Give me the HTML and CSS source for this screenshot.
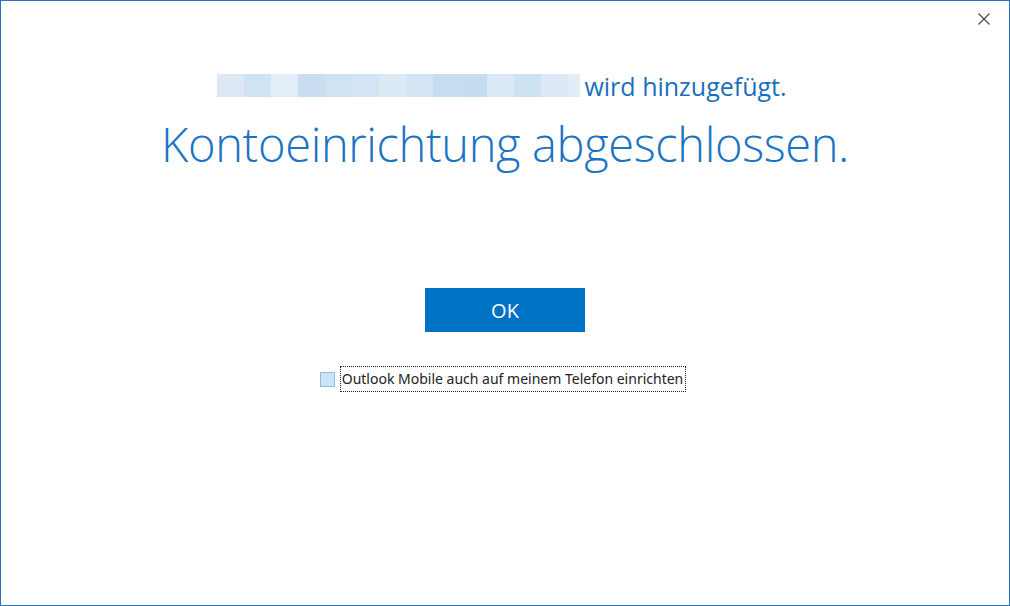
FILE: index.html
```html
<!DOCTYPE html>
<html lang="de">
<head>
  <meta charset="UTF-8">
  <title>Konto hinzufügen</title>
  <link rel="stylesheet" href="styles.css">
</head>
<body>
  <div class="window">
    <button class="close" aria-label="Schließen">
      <svg width="12" height="12" viewBox="0 0 12 12"><path d="M0.5 0.5 L11.5 11.5 M11.5 0.5 L0.5 11.5" stroke="#444" stroke-width="1.1" fill="none"/></svg>
    </button>
    <div class="adding">
      <span class="blurred">
        <i style="background:#dce9f5"></i><i style="background:#d0e3f3"></i><i style="background:#e3eef8"></i><i style="background:#c9def1"></i><i style="background:#d0e3f3"></i><i style="background:#d3e5f4"></i><i style="background:#dceaf6"></i><i style="background:#d3e5f4"></i><i style="background:#c7ddf1"></i><i style="background:#c5dcf1"></i><i style="background:#dbe9f6"></i><i style="background:#cce1f2"></i><i style="background:#dde9f6"></i><i class="last" style="background:#e2edf8"></i>
      </span>
      <span class="adding-text">wird hinzugefügt.</span>
    </div>
    <h1 class="title">Kontoeinrichtung abgeschlossen.</h1>
    <button class="ok">OK</button>
    <label class="mobile">
      <span class="box"></span>
      <span class="focus">Outlook Mobile auch auf meinem Telefon einrichten</span>
    </label>
  </div>
</body>
</html>
```

FILE: styles.css
```css
body {
  margin: 0;
  font-family: "Open Sans", "Noto Sans", sans-serif;
  background: #ffffff;
}
.window {
  box-sizing: border-box;
  width: 1010px;
  height: 606px;
  border: 1px solid #2a72bb;
  display: flex;
  flex-direction: column;
  align-items: center;
  position: relative;
}
.close {
  position: absolute;
  top: 12px;
  right: 19px;
  width: 12px;
  height: 12px;
  padding: 0;
  border: none;
  background: none;
  line-height: 0;
}
.adding {
  display: flex;
  align-items: flex-end;
  margin-top: 70px;
  margin-left: -6px;
  height: 30px;
}
.blurred {
  display: flex;
  height: 23px;
  margin-bottom: 4px;
}
.blurred i {
  display: block;
  width: 27px;
  height: 23px;
}
.blurred i.last {
  width: 12px;
}
.adding-text {
  margin-left: 4px;
  font-size: 25px;
  color: #1a6fbd;
  line-height: 30px;
}
.title {
  margin: 13px 0 0 0;
  font-size: 47px;
  font-weight: 300;
  color: #1a73c3;
  line-height: 60px;
  letter-spacing: -0.35px;
}
.ok {
  margin-top: 114px;
  width: 160px;
  height: 44px;
  border: none;
  background: #0072c6;
  color: #ffffff;
  font-family: inherit;
  font-size: 20px;
  padding: 0;
}
.mobile {
  display: flex;
  align-items: center;
  gap: 5px;
  margin-top: 34px;
  margin-left: -4px;
  font-family: "Noto Sans", sans-serif;
  font-size: 14px;
  color: #222222;
}
.box {
  box-sizing: border-box;
  width: 15px;
  height: 15px;
  background: #cce4f7;
  border: 1px solid #90bde4;
}
.focus {
  border: 1px dotted #222;
  padding: 2px 2px 3px 1px;
  line-height: 19px;
}
```
